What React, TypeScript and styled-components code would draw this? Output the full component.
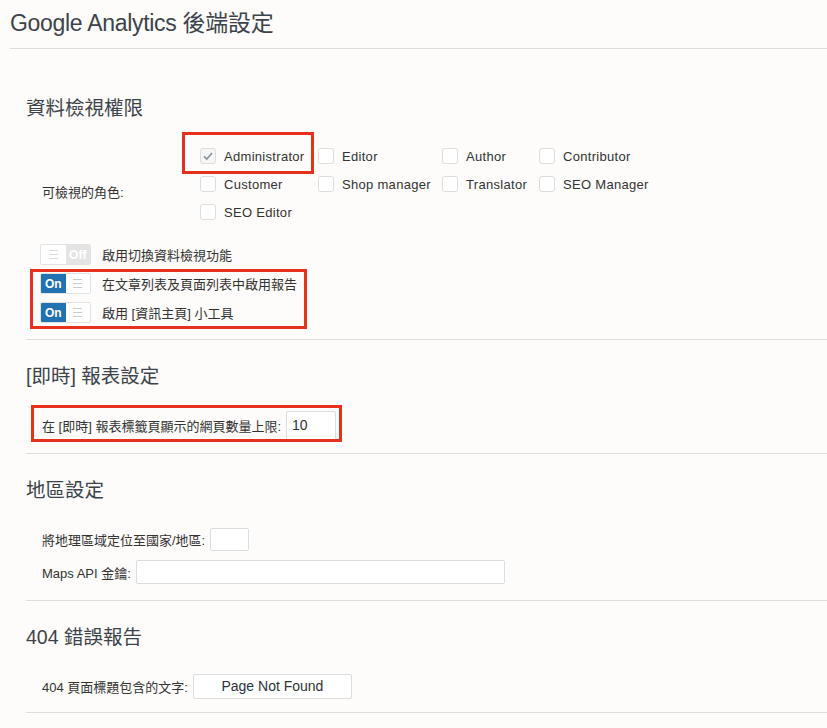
import React from 'react';
import styled, { createGlobalStyle } from 'styled-components';

const GlobalStyle = createGlobalStyle`
  body {
    margin: 0;
    background: #fdfcfa;
    font-family: "Liberation Sans", "Noto Sans CJK TC", sans-serif;
    color: #333;
  }
`;

const Page = styled.div`
  padding-left: 10px;
`;

const Title = styled.h1`
  margin: 0;
  padding: 8px 0 10px;
  font-size: 23px;
  font-weight: 400;
  line-height: 30px;
  letter-spacing: -0.3px;
  color: #3c434a;
  border-bottom: 1px solid #dcdcde;
`;

const Sections = styled.div`
  margin: 23px 0 0 16px;
`;

const Section = styled.section<{ $pb?: number }>`
  padding: 24px 0 ${p => p.$pb ?? 13}px;
  border-bottom: 1px solid #dddddd;
`;

const SectionTitle = styled.h2`
  margin: 0 0 22px;
  font-size: 19.5px;
  font-weight: 400;
  line-height: 24px;
  color: #3c434a;
`;

const Marked = styled.div<{ $t: number; $r: number; $b: number; $l: number }>`
  position: relative;
  width: fit-content;

  &::after {
    content: '';
    position: absolute;
    top: ${p => -p.$t}px;
    right: ${p => -p.$r}px;
    bottom: ${p => -p.$b}px;
    left: ${p => -p.$l}px;
    border: 3px solid #e8311d;
    pointer-events: none;
  }
`;

const RolesRow = styled.div`
  display: grid;
  grid-template-columns: 158px auto;
  padding-left: 16px;
  font-size: 13px;
`;

const RolesLabel = styled.div`
  align-self: center;
  margin-top: 14px;
`;

const RoleGrid = styled.div`
  display: grid;
  grid-template-columns: 118px 124px 97px auto;
  grid-auto-rows: 28px;
`;

const RoleItem = styled.label`
  display: flex;
  align-items: center;
  gap: 8px;
  height: 28px;
  width: 118px;
`;

const RoleText = styled.span`
  letter-spacing: 0.3px;
`;

const Box = styled.span<{ $checked?: boolean }>`
  width: 16px;
  height: 16px;
  box-sizing: border-box;
  border: 1px solid #dddddd;
  border-radius: 3px;
  background: ${p => (p.$checked ? '#f6f6f6' : '#fff')};
  display: flex;
  align-items: center;
  justify-content: center;
  flex: none;
`;

const ToggleList = styled.div`
  margin-top: 14px;
  font-size: 13px;
`;

const ToggleRow = styled.div`
  display: flex;
  align-items: center;
  gap: 11px;
  height: 29px;
  padding-left: 14px;
`;

const Switch = styled.span`
  display: inline-flex;
  width: 51px;
  height: 21px;
  box-sizing: border-box;
  border: 1px solid #e2e2e2;
  border-radius: 2px;
  background: #fff;
  overflow: hidden;
  flex: none;
`;

const SwitchText = styled.span<{ $on: boolean }>`
  flex: 1;
  display: flex;
  align-items: center;
  justify-content: center;
  background: ${p => (p.$on ? '#2271b1' : '#e4e4e4')};
  color: #fff;
  font-size: 12px;
  font-weight: 700;
`;

const SwitchGrip = styled.span<{ $on: boolean }>`
  flex: 1;
  display: flex;
  flex-direction: column;
  align-items: center;
  justify-content: center;
  gap: 3px;

  & > i {
    display: block;
    width: 9px;
    height: 1px;
    background: ${p => (p.$on ? '#cccccc' : '#dddddd')};
  }
`;

const FieldList = styled.div`
  display: flex;
  flex-direction: column;
  gap: 3px;
`;

const FieldRow = styled.div`
  display: flex;
  align-items: center;
  gap: 5px;
  height: 30px;
  padding-left: 16px;
  font-size: 13px;
`;

const Input = styled.input<{ $w: number; $h: number; $center?: boolean }>`
  width: ${p => p.$w}px;
  height: ${p => p.$h}px;
  box-sizing: border-box;
  margin: 0;
  padding: 0 5px;
  border: 1px solid #dddddd;
  border-radius: 2px;
  background: #fff;
  font-family: "Liberation Sans", "Noto Sans CJK TC", sans-serif;
  font-size: 14px;
  color: #2c3338;
  text-align: ${p => (p.$center ? 'center' : 'left')};
  outline: none;
`;

const Check: React.FC = () => (
  <svg width="12" height="12" viewBox="0 0 12 12">
    <path d="M2 6.3 L4.8 9 L10 3" fill="none" stroke="#8c8f94" strokeWidth="1.6" />
  </svg>
);

const Toggle: React.FC<{ on: boolean }> = ({ on }) => {
  const grip = (
    <SwitchGrip $on={on}>
      <i />
      <i />
      <i />
    </SwitchGrip>
  );
  return (
    <Switch>
      {on ? (
        <>
          <SwitchText $on>On</SwitchText>
          {grip}
        </>
      ) : (
        <>
          {grip}
          <SwitchText $on={false}>Off</SwitchText>
        </>
      )}
    </Switch>
  );
};

const roles = [
  'Administrator',
  'Editor',
  'Author',
  'Contributor',
  'Customer',
  'Shop manager',
  'Translator',
  'SEO Manager',
  'SEO Editor',
];

const App: React.FC = () => (
  <Page>
    <GlobalStyle />
    <Title>Google Analytics 後端設定</Title>
    <Sections>
      <Section $pb={12}>
        <SectionTitle>資料檢視權限</SectionTitle>
        <RolesRow>
          <RolesLabel>可檢視的角色:</RolesLabel>
          <RoleGrid>
            {roles.map((role, i) => {
              const item = (
                <RoleItem key={role}>
                  <Box $checked={i === 0}>{i === 0 && <Check />}</Box>
                  <RoleText>{role}</RoleText>
                </RoleItem>
              );
              return i === 0 ? (
                <Marked key={role} $t={10} $r={-4} $b={4} $l={18}>
                  {item}
                </Marked>
              ) : (
                item
              );
            })}
          </RoleGrid>
        </RolesRow>
        <ToggleList>
          <ToggleRow>
            <Toggle on={false} />
            <span>啟用切換資料檢視功能</span>
          </ToggleRow>
          <Marked $t={0} $r={10} $b={2} $l={-4}>
            <ToggleRow>
              <Toggle on />
              <span>在文章列表及頁面列表中啟用報告</span>
            </ToggleRow>
            <ToggleRow>
              <Toggle on />
              <span>啟用 [資訊主頁] 小工具</span>
            </ToggleRow>
          </Marked>
        </ToggleList>
      </Section>

      <Section>
        <SectionTitle>[即時] 報表設定</SectionTitle>
        <Marked $t={5} $r={6} $b={2} $l={-5}>
          <FieldRow>
            <span>在 [即時] 報表標籤頁顯示的網頁數量上限:</span>
            <Input $w={50} $h={29} defaultValue="10" />
          </FieldRow>
        </Marked>
      </Section>

      <Section>
        <SectionTitle>地區設定</SectionTitle>
        <FieldList>
          <FieldRow>
            <span>將地理區域定位至國家/地區:</span>
            <Input $w={39} $h={23} defaultValue="" />
          </FieldRow>
          <FieldRow>
            <span>Maps API 金鑰:</span>
            <Input $w={369} $h={24} defaultValue="" />
          </FieldRow>
        </FieldList>
      </Section>

      <Section $pb={11}>
        <SectionTitle>404 錯誤報告</SectionTitle>
        <FieldRow>
          <span>404 頁面標題包含的文字:</span>
          <Input $w={159} $h={25} $center defaultValue="Page Not Found" />
        </FieldRow>
      </Section>
    </Sections>
  </Page>
);

export default App;
